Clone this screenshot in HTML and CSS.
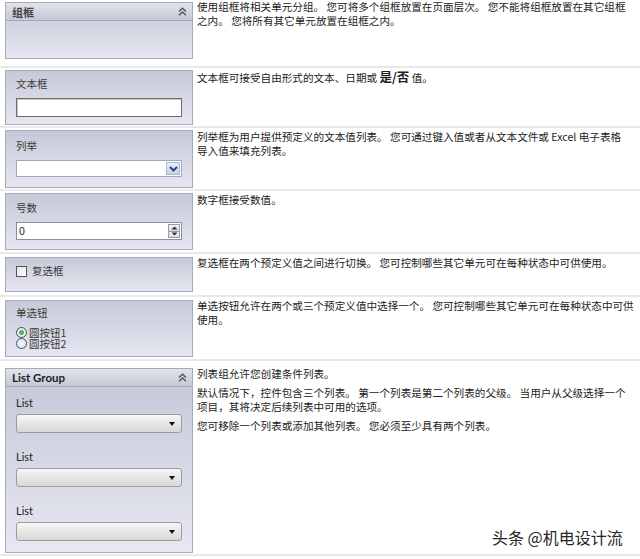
FILE: index.html
```html
<!DOCTYPE html>
<html>
<head>
<meta charset="utf-8">
<link rel="stylesheet" href="styles.css">
</head>
<body>
<div class="sheet">

  <div class="row r1">
    <div class="cell-left">
      <div class="panel hpanel">
        <div class="phead">
          <span class="ptitle cjk">组框</span>
          <svg class="chev" width="9" height="9" viewBox="0 0 9 9"><path d="M1 4.5 L4.5 1.2 L8 4.5 M1 8.2 L4.5 4.9 L8 8.2" fill="none" stroke="#555" stroke-width="1.4"/></svg>
        </div>
      </div>
    </div>
    <div class="desc"><p>使用组框将相关单元分组。 您可将多个组框放置在页面层次。 您不能将组框放置在其它组框<br>之内。 您将所有其它单元放置在组框之内。</p></div>
  </div>

  <div class="row r2">
    <div class="cell-left">
      <div class="panel body">
        <div class="label cjk">文本框</div>
        <div class="textbox"></div>
      </div>
    </div>
    <div class="desc"><p>文本框可接受自由形式的文本、日期或 <b class="big">是/否</b> 值。</p></div>
  </div>

  <div class="row r3">
    <div class="cell-left">
      <div class="panel body">
        <div class="label cjk">列举</div>
        <div class="combo">
          <span class="combo-btn"><svg width="9" height="6" viewBox="0 0 9 6"><path d="M1 1 L4.5 4.5 L8 1" fill="none" stroke="#1d3c7c" stroke-width="1.8"/></svg></span>
        </div>
      </div>
    </div>
    <div class="desc"><p>列举框为用户提供预定义的文本值列表。 您可通过键入值或者从文本文件或 Excel 电子表格<br>导入值来填充列表。</p></div>
  </div>

  <div class="row r4">
    <div class="cell-left">
      <div class="panel body">
        <div class="label cjk">号数</div>
        <div class="numbox">
          <span class="numval">0</span>
          <span class="spin">
            <span class="spin-h"><svg width="7" height="4" viewBox="0 0 7 4"><path d="M0.5 3.5 L3.5 0.5 L6.5 3.5 Z" fill="#333"/></svg></span>
            <span class="spin-h"><svg width="7" height="4" viewBox="0 0 7 4"><path d="M0.5 0.5 L3.5 3.5 L6.5 0.5 Z" fill="#333"/></svg></span>
          </span>
        </div>
      </div>
    </div>
    <div class="desc"><p>数字框接受数值。</p></div>
  </div>

  <div class="row r5">
    <div class="cell-left">
      <div class="panel body">
        <div class="checkrow cjk"><span class="checkbox"></span><span>复选框</span></div>
      </div>
    </div>
    <div class="desc"><p>复选框在两个预定义值之间进行切换。 您可控制哪些其它单元可在每种状态中可供使用。</p></div>
  </div>

  <div class="row r6">
    <div class="cell-left">
      <div class="panel body">
        <div class="label cjk">单选钮</div>
        <div class="radios cjk">
          <div class="radiorow"><span class="radio on"></span><span>圆按钮1</span></div>
          <div class="radiorow"><span class="radio"></span><span>圆按钮2</span></div>
        </div>
      </div>
    </div>
    <div class="desc"><p>单选按钮允许在两个或三个预定义值中选择一个。 您可控制哪些其它单元可在每种状态中可供<br>使用。</p></div>
  </div>

  <div class="row r7">
    <div class="cell-left">
      <div class="panel hpanel lg">
        <div class="phead">
          <span class="ptitle latin">List Group</span>
          <svg class="chev" width="9" height="9" viewBox="0 0 9 9"><path d="M1 4.5 L4.5 1.2 L8 4.5 M1 8.2 L4.5 4.9 L8 8.2" fill="none" stroke="#555" stroke-width="1.4"/></svg>
        </div>
        <div class="lgbody">
          <div class="lgitem">
            <div class="lglabel">List</div>
            <div class="dd"><svg width="6" height="4" viewBox="0 0 6 4"><path d="M0 0 L6 0 L3 4 Z" fill="#111"/></svg></div>
          </div>
          <div class="lgitem">
            <div class="lglabel">List</div>
            <div class="dd"><svg width="6" height="4" viewBox="0 0 6 4"><path d="M0 0 L6 0 L3 4 Z" fill="#111"/></svg></div>
          </div>
          <div class="lgitem">
            <div class="lglabel">List</div>
            <div class="dd"><svg width="6" height="4" viewBox="0 0 6 4"><path d="M0 0 L6 0 L3 4 Z" fill="#111"/></svg></div>
          </div>
        </div>
      </div>
    </div>
    <div class="desc">
      <p>列表组允许您创建条件列表。</p>
      <p>默认情况下，控件包含三个列表。 第一个列表是第二个列表的父级。 当用户从父级选择一个<br>项目，其将决定后续列表中可用的选项。</p>
      <p>您可移除一个列表或添加其他列表。 您必须至少具有两个列表。</p>
    </div>
  </div>

</div>
<div class="watermark">头条 @机电设计流</div>
</body>
</html>
```

FILE: styles.css
```css
html, body {
  margin: 0;
  padding: 0;
  background: #ffffff;
}

body {
  width: 640px;
  height: 559px;
  overflow: hidden;
  position: relative;
  font-family: "Noto Sans CJK SC", "Liberation Sans", sans-serif;
  color: #222;
}

.sheet {
  display: flex;
  flex-direction: column;
}

.row {
  display: grid;
  grid-template-columns: 193px 1fr;
  border-bottom: 2px solid #e8e9ed;
  box-sizing: border-box;
}

.cell-left {
  padding-left: 5px;
}

.panel {
  width: 188px;
  box-sizing: border-box;
  border: 1px solid #a6aabb;
  background: linear-gradient(#c6c9d8, #e5e6f0);
  display: flex;
  flex-direction: column;
}

.body {
  padding: 0 10px;
}

.cjk {
  font-family: "Noto Sans CJK SC", sans-serif;
}

.latin {
  font-family: Lato, "Open Sans", sans-serif;
}

/* row geometry */
.r1 { height: 68px; }
.r1 .panel { margin-top: 2px; height: 57px; }
.r2 { height: 60px; }
.r2 .panel { margin-top: 2px; height: 55px; padding-top: 6px; }
.r3 { height: 63px; }
.r3 .panel { margin-top: 2px; height: 58px; padding-top: 8px; }
.r4 { height: 63px; }
.r4 .panel { margin-top: 2px; height: 57px; padding-top: 7px; }
.r5 { height: 43px; }
.r5 .panel { margin-top: 3px; height: 35px; padding-top: 6px; }
.r6 { height: 64px; }
.r6 .panel { margin-top: 3px; height: 57px; padding-top: 5px; }
.r7 { height: 195px; }
.r7 .panel { margin-top: 7px; height: 185px; }

/* header panels */
.hpanel {
  background: linear-gradient(#c4c7d6, #e6e7f1);
}

.phead {
  height: 17px;
  flex: none;
  display: flex;
  align-items: center;
  justify-content: space-between;
  padding: 0 5px 0 6px;
  background: linear-gradient(#e2e4eb, #c5c8d5);
  border-bottom: 1px solid #a3a7b7;
}

.ptitle {
  font-size: 11px;
  font-weight: bold;
  color: #444;
}

.lg .ptitle {
  color: #1e1e1e;
  font-size: 11.5px;
}

.chev {
  display: block;
}

/* labels */
.label {
  font-size: 10.5px;
  line-height: 14px;
  color: #3a3a3a;
}

.textbox {
  margin-top: 7px;
  height: 19px;
  box-sizing: border-box;
  border: 1px solid #6c6c6c;
  box-shadow: inset 1px 1px 0 #c9c9c9;
  background: #fff;
}

.combo {
  margin-top: 7px;
  height: 17px;
  box-sizing: border-box;
  border: 1px solid #a2a7b8;
  background: #fff;
  display: flex;
  justify-content: flex-end;
  padding: 1px;
}

.combo-btn {
  width: 14px;
  box-sizing: border-box;
  border: 1px solid #a9bad4;
  background: linear-gradient(#e6eef9, #c3d3ea);
  display: flex;
  align-items: center;
  justify-content: center;
}

.numbox {
  margin-top: 7px;
  height: 18px;
  box-sizing: border-box;
  border: 1px solid #8b8f9c;
  background: #fff;
  display: flex;
  align-items: center;
  justify-content: space-between;
  padding: 1px 1px 1px 2px;
}

.numval {
  font-family: "Liberation Sans", sans-serif;
  font-size: 10.5px;
  color: #222;
}

.spin {
  width: 12px;
  height: 100%;
  display: flex;
  flex-direction: column;
  border: 1px solid #9a9da8;
  box-sizing: border-box;
}

.spin-h {
  flex: 1;
  display: flex;
  align-items: center;
  justify-content: center;
  background: linear-gradient(#f2f3f6, #d9dbe2);
}

.spin-h + .spin-h {
  border-top: 1px solid #9a9da8;
}

.checkrow {
  display: flex;
  align-items: center;
  gap: 5px;
  font-size: 10.5px;
  line-height: 14px;
  color: #3a3a3a;
}

.checkbox {
  width: 11px;
  height: 11px;
  box-sizing: border-box;
  border: 1px solid #555;
  background: linear-gradient(135deg, #e4e4e4, #ffffff);
}

.radios {
  margin-top: 7px;
  font-size: 10.5px;
  line-height: 11px;
  color: #3a3a3a;
}

.radiorow {
  display: flex;
  align-items: center;
  gap: 2px;
  height: 11px;
}

.radio {
  width: 11px;
  height: 11px;
  box-sizing: border-box;
  border: 1px solid #3e5268;
  border-radius: 50%;
  background: radial-gradient(circle, #f2f7fb 0%, #cfe0ea 100%);
  position: relative;
}

.radio.on {
  background: radial-gradient(circle, #5fb55a 0, #5fb55a 2.2px, #e8f2f7 2.8px, #cfe0ea 100%);
}

/* list group */
.lgbody {
  padding: 9px 10px 0 10px;
  display: flex;
  flex-direction: column;
  gap: 17px;
}

.lglabel {
  font-family: Lato, "Open Sans", sans-serif;
  font-size: 11px;
  line-height: 14px;
  color: #222;
}

.dd {
  margin-top: 4px;
  height: 19px;
  box-sizing: border-box;
  border: 1px solid #9c9c9c;
  border-radius: 3px;
  background: linear-gradient(#f7f7f7, #e6e6e6 50%, #d8d8d8);
  display: flex;
  align-items: center;
  justify-content: flex-end;
  padding-right: 6px;
}

.dd svg {
  display: block;
}

/* description column */
.desc {
  padding: 2px 0 0 4px;
  font-size: 10.6px;
  line-height: 14px;
  color: #222;
  white-space: nowrap;
}

.desc p {
  margin: 0;
}

.r1 .desc { padding-top: 0; }
.r7 .desc { padding-top: 6px; }
.r7 .desc p + p { margin-top: 5px; }

.big {
  font-size: 12.5px;
}

.watermark {
  position: absolute;
  left: 492px;
  top: 527px;
  font-family: "Noto Sans CJK SC", sans-serif;
  font-size: 16px;
  line-height: 20px;
  color: #262626;
  text-shadow: 0 0 2px #fff;
}
```
